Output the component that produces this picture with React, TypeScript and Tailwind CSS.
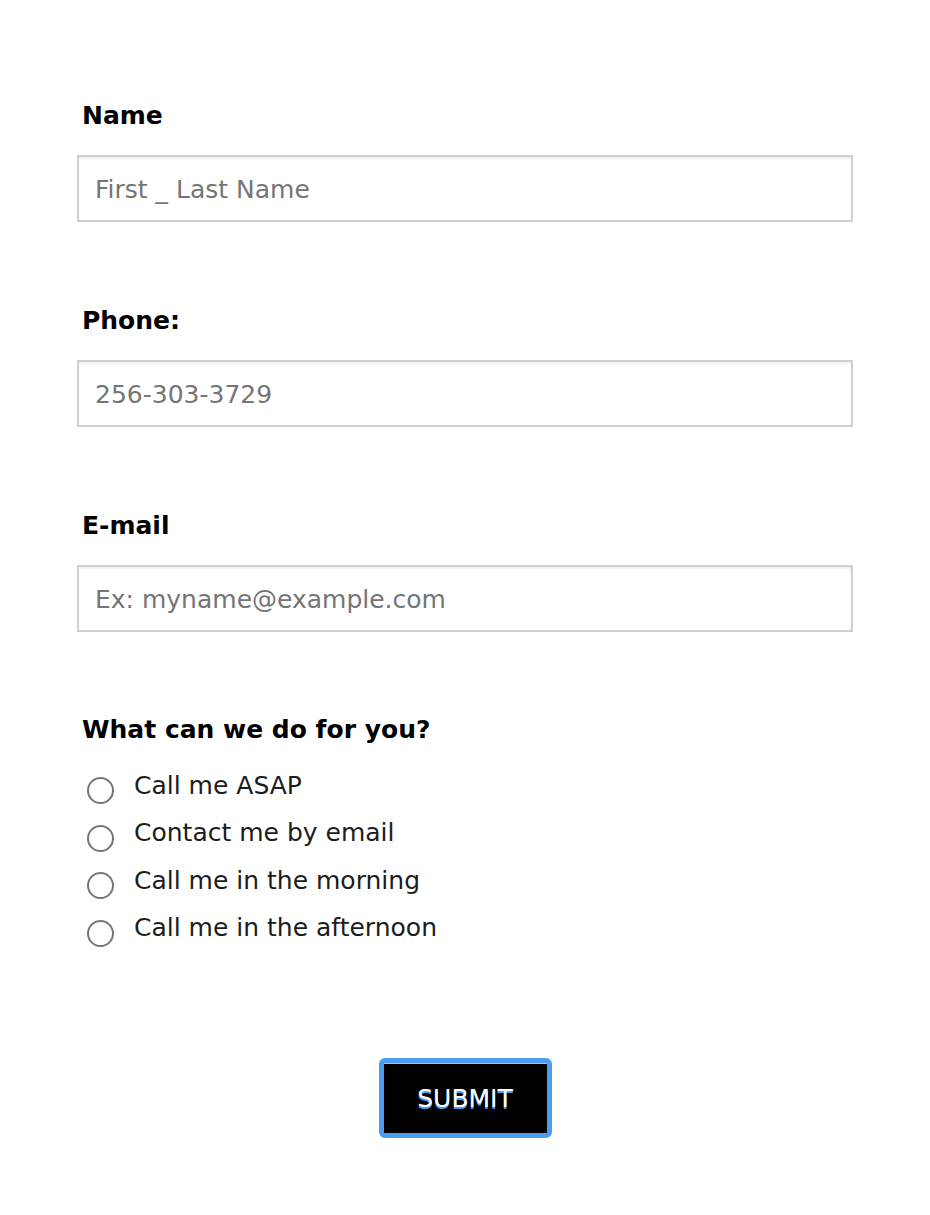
import React from "react";

const font = { fontFamily: '"DejaVu Sans", Verdana, sans-serif' };

function Field({ label, placeholder, gapAfter }: { label: string; placeholder: string; gapAfter: string }) {
  return (
    <div className={gapAfter}>
      <div className="pl-[5px] text-[25px] leading-[30px] font-bold text-black">{label}</div>
      <input
        type="text"
        placeholder={placeholder}
        className="mt-[24px] block h-[67px] w-full border-2 border-[#cfcfcf] bg-white pl-[16px] pt-[2px] text-[25px] text-black shadow-[inset_0_2px_2px_rgba(0,0,0,0.06)] outline-none placeholder:text-[#757575]"
        style={font}
      />
    </div>
  );
}

const options = ["Call me ASAP", "Contact me by email", "Call me in the morning", "Call me in the afternoon"];

export default function App() {
  return (
    <div className="min-h-[1215px] w-[930px] bg-white" style={font}>
      <div className="ml-[77px] w-[776px] pt-[101px]">
        <Field label="Name" placeholder="First _ Last Name" gapAfter="mb-[84px]" />
        <Field label="Phone:" placeholder="256-303-3729" gapAfter="mb-[84px]" />
        <Field label="E-mail" placeholder="Ex: myname@example.com" gapAfter="mb-[83px]" />
        <div className="pl-[5px] text-[25px] leading-[30px] font-bold text-black">What can we do for you?</div>
        <div className="mt-[17px] flex flex-col">
          {options.map((o) => (
            <label key={o} className="flex h-[47.5px] items-center">
              <span className="ml-[10px] mt-[10px] block h-[27px] w-[27px] shrink-0 rounded-full border-2 border-[#767676] bg-white" />
              <span className="ml-[20px] text-[25px] leading-[30px] text-[#1c1c1c]">{o}</span>
            </label>
          ))}
        </div>
        <div className="mt-[106px] flex justify-center">
          <button
            type="button"
            className="flex h-[80px] w-[173px] items-center justify-center rounded-[6px] border-[5px] border-[#4a9ef0] bg-[#4a9ef0] p-0"
          >
            <span className="flex h-full w-full items-center justify-center border-t border-[#bdbdbd] bg-black text-[25px] leading-[30px] text-white [text-shadow:0_2px_0_#4a9ef0]">
              SUBMIT
            </span>
          </button>
        </div>
      </div>
    </div>
  );
}
